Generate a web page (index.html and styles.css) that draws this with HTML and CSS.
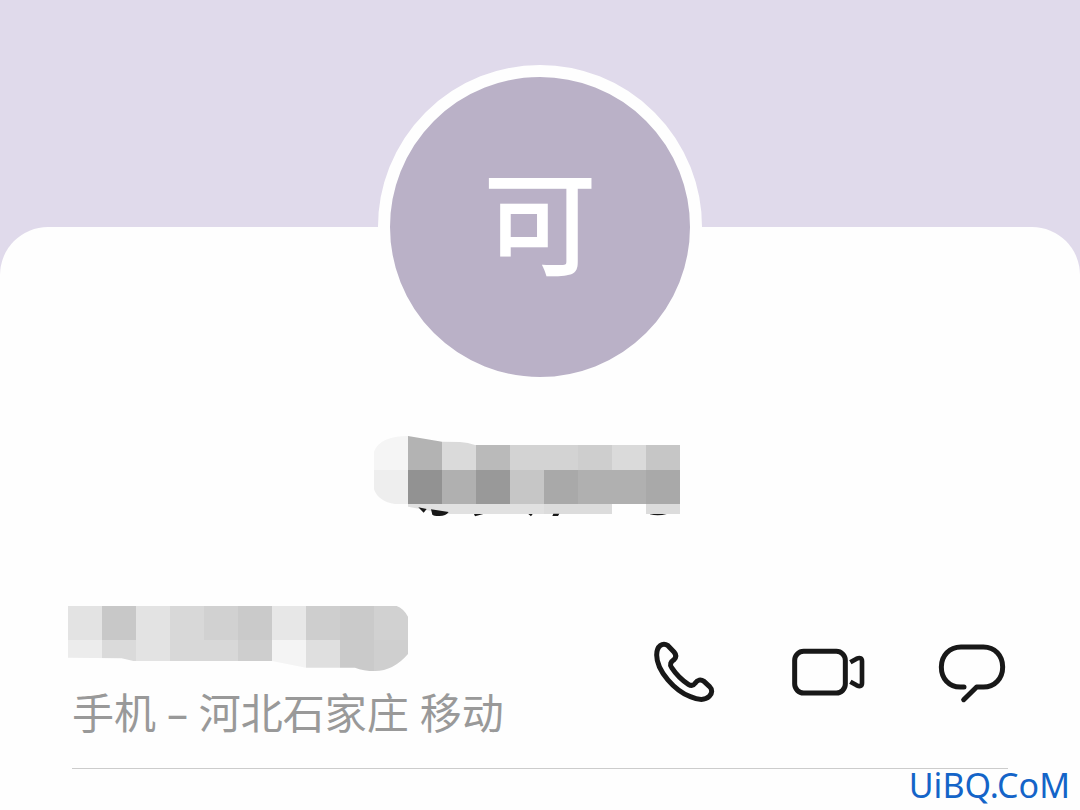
FILE: index.html
```html
<!DOCTYPE html>
<html lang="zh-CN">
  <head>
    <meta charset="UTF-8" />
    <meta name="viewport" content="width=device-width, initial-scale=1.0" />
    <title>联系人</title>
    <link rel="stylesheet" href="styles.css">
  </head>
  <body>
    <main class="card">
      <div class="avatar">可</div>

      <svg class="name-mask" viewBox="42 48 996 246" aria-hidden="true">
        <clipPath id="name-shape">
          <path d="M42 95Q60 48 144 48L246 65L300 66Q325 68 345 75H960V282H858V252H756V282H260L144 260V252H105Q55 245 42 208Z" />
        </clipPath>
        <g clip-path="url(#name-shape)">
          <path fill="#f5f5f5" d="M42 48h102v102H42z" />
          <path fill="#b3b3b3" d="M144 48h102v102H144z" />
          <path fill="#dadada" d="M246 48h102v102H246zM756 48h102v102H756z" />
          <path fill="#bababa" d="M348 48h102v102H348z" />
          <path fill="#d3d3d3" d="M450 48h204v102H450z" />
          <path fill="#cecece" d="M654 48h102v102H654z" />
          <path fill="#c6c6c6" d="M858 48h102v102H858zM450 150h102v102H450z" />
          <path fill="#eeeeee" d="M42 150h102v102H42z" />
          <path fill="#929292" d="M144 150h102v102H144z" />
          <path fill="#b0b0b0" d="M246 150h102v102H246zM654 150h204v102H654z" />
          <path fill="#999999" d="M348 150h102v102H348z" />
          <path fill="#a9a9a9" d="M552 150h102v102H552zM858 150h102v102H858z" />
          <path fill="#e1e1e1" d="M144 252h408v30H144z" />
          <path fill="#dcdcdc" d="M552 252h408v30H552z" />
        </g>
        <path fill="#181818" d="M175 262L200 267L191 278ZM213 268L266 276Q258 288 238 288Q220 288 217 284ZM342 282H370L345 289ZM505 282H518L513 289ZM580 281H598L594 288H577ZM870 282H920Q895 289 870 283Z" />
      </svg>

      <section class="phone">
        <div class="phone-info">
          <svg class="number-mask" viewBox="54 48 1020 198" aria-hidden="true">
            <clipPath id="number-shape">
              <path d="M54 48H1040Q1060 55 1074 80V192Q1030 243 975 243Q940 243 915 233H768L666 213H250L215 205L54 203Z" />
            </clipPath>
            <g clip-path="url(#number-shape)">
              <path fill="#e3e3e3" d="M54 48h102v102H54zM258 48h102v165H258z" />
              <path fill="#c8c8c8" d="M156 48h102v102H156z" />
              <path fill="#d8d8d8" d="M360 48h102v165H360zM462 150h102v63H462z" />
              <path fill="#d1d1d1" d="M462 48h102v102H462zM972 48h102v102H972z" />
              <path fill="#cacaca" d="M564 48h102v102H564zM870 48h102v198H870z" />
              <path fill="#e7e7e7" d="M666 48h102v102H666z" />
              <path fill="#cecece" d="M768 48h102v102H768zM564 150h102v63H564z" />
              <path fill="#ececec" d="M54 150h102v60H54z" />
              <path fill="#dadada" d="M156 150h102v63H156z" />
              <path fill="#f4f4f4" d="M666 150h102v96H666z" />
              <path fill="#dfdfdf" d="M768 150h102v96H768z" />
              <path fill="#cfcfcf" d="M972 150h102v96H972z" />
            </g>
          </svg>
          <p class="phone-label">手机 – 河北石家庄 移动</p>
        </div>

        <div class="actions">
          <button class="action" type="button" aria-label="拨打电话">
            <svg viewBox="12 6 240 240">
              <path d="M50 75C50 48 68 36 84 47L102 66C109 74 109 82 102 89C92 96 88 103 95 113C108 133 125 150 145 163C153 168 160 167 165 160C172 149 182 147 192 154L208 169C218 179 217 190 208 199C194 213 172 209 151 200C106 183 50 124 50 75Z" />
            </svg>
          </button>
          <button class="action" type="button" aria-label="视频通话">
            <svg viewBox="24 -9 240 240">
              <rect x="44" y="49" width="152" height="125" rx="27" />
              <path class="lens" d="M211 82L230 71Q246 65 246 79V144Q246 158 230 151L211 140" />
            </svg>
          </button>
          <button class="action" type="button" aria-label="发信息">
            <svg viewBox="21 6 240 240">
              <path d="M117 171H106C71 171 49 145 49 111S73 51 108 51H175C210 51 233 77 233 111S210 171 175 171H155L116 209" />
            </svg>
          </button>
        </div>
      </section>
    </main>

    <div class="watermark">UiBQ.CoM</div>
  </body>
</html>
```

FILE: styles.css
```css
* {
  margin: 0;
  padding: 0;
  box-sizing: border-box;
}

body {
  position: relative;
  display: flex;
  flex-direction: column;
  min-height: 100vh;
  padding-top: 227px;
  background-color: #e0daeb;
  font-family: "Noto Sans", "Noto Sans CJK SC", sans-serif;
}

.card {
  flex: 1;
  display: flex;
  flex-direction: column;
  align-items: center;
  background-color: #fefefe;
  border-radius: 48px 48px 0 0;
}

.avatar {
  display: flex;
  justify-content: center;
  align-items: center;
  width: 324px;
  height: 324px;
  margin-top: -162px;
  padding-bottom: 20px;
  border: 12px solid #fefefe;
  border-radius: 50%;
  background-color: #bab1c7;
  color: #fff;
  font-family: "Noto Sans CJK SC", sans-serif;
  font-size: 114px;
  font-weight: 500;
  line-height: 1;
}

.name-mask {
  width: 332px;
  height: 82px;
  margin-top: 47px;
}

.phone {
  position: relative;
  display: flex;
  justify-content: space-between;
  align-items: flex-start;
  width: 100%;
  margin-top: 88px;
  padding: 0 68px 28px;
}

.phone::after {
  content: "";
  position: absolute;
  left: 72px;
  right: 72px;
  bottom: -1px;
  height: 1px;
  background-color: #ccc;
}

.number-mask {
  display: block;
  width: 340px;
  height: 66px;
}

.phone-label {
  margin-top: 14px;
  padding-left: 4px;
  color: #999;
  font-size: 42px;
  line-height: 54px;
}

.actions {
  display: flex;
  gap: 64px;
  margin-top: 26px;
}

.action {
  width: 80px;
  height: 80px;
  border: none;
  background: none;
  cursor: pointer;
}

.action svg {
  display: block;
  width: 80px;
  height: 80px;
  fill: none;
  stroke: #181818;
  stroke-width: 15px;
  stroke-linecap: round;
  stroke-linejoin: round;
}

.action .lens {
  stroke-width: 14px;
  stroke-linecap: butt;
}

.watermark {
  position: absolute;
  right: 10px;
  bottom: 5px;
  color: #1464c8;
  font-size: 34px;
  line-height: 40px;
}
```
